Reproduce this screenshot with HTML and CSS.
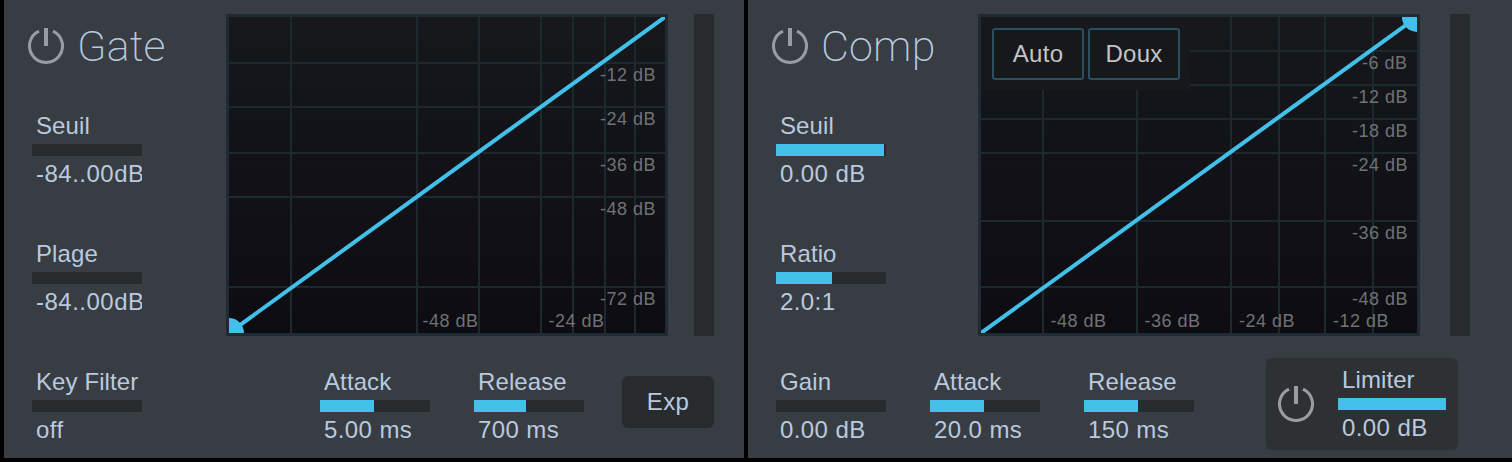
FILE: index.html
```html
<!DOCTYPE html>
<html lang="fr">
<head>
<meta charset="utf-8">
<title>Gate / Comp</title>
<link rel="stylesheet" href="styles.css">
</head>
<body>
<main class="rack">
  <section class="panel gate">
    <div class="side">
      <header class="head">
        <svg class="power" viewBox="0 0 36 36"><path d="M11 3.060A16.500 16.500 0 1 0 25 3.060"/><path class="stem" d="M18 0V18"/></svg>
        <h1 class="title">Gate</h1>
      </header>
      <div class="knob k1"><span class="label">Seuil</span><div class="bar"></div><span class="value clip">-84..00dB</span></div>
      <div class="knob k2"><span class="label">Plage</span><div class="bar"></div><span class="value clip">-84..00dB</span></div>
    </div>
    <div class="graph">
      <svg class="plot" viewBox="0 0 436 316">
        <defs><linearGradient id="g1" x1="0" y1="0" x2="0" y2="1"><stop offset="0" stop-color="#16181c"/><stop offset="1" stop-color="#0d0c12"/></linearGradient></defs>
        <rect width="436" height="316" fill="url(#g1)"/>
        <path class="grid" d="M62 0V316M188 0V316M250 0V316M312 0V316M344 0V316M376 0V316M406 0V316M0 46H436M0 90H436M0 136H436M0 180H436M0 270H436"/>
        <text class="db" x="371" y="64">-12 dB</text>
        <text class="db" x="371" y="108">-24 dB</text>
        <text class="db" x="371" y="154">-36 dB</text>
        <text class="db" x="371" y="198">-48 dB</text>
        <text class="db" x="371" y="288">-72 dB</text>
        <text class="db" x="193.500" y="310">-48 dB</text>
        <text class="db" x="319.500" y="310">-24 dB</text>
        <path class="curve" d="M0 316L436 0"/>
        <path class="dot" d="M0 301A15 15 0 0 1 15 316H0Z"/>
      </svg>
    </div>
    <div class="meter"></div>
    <div class="foot">
      <div class="knob"><span class="label">Key Filter</span><div class="bar"></div><span class="value">off</span></div>
      <div class="knob knob-attack"><span class="label">Attack</span><div class="bar"><div class="fill" style="width:49%"></div></div><span class="value">5.00 ms</span></div>
      <div class="knob knob-release"><span class="label">Release</span><div class="bar"><div class="fill" style="width:47%"></div></div><span class="value">700 ms</span></div>
      <button class="exp">Exp</button>
    </div>
  </section>
  <section class="panel comp">
    <div class="side">
      <header class="head">
        <svg class="power" viewBox="0 0 36 36"><path d="M11 3.060A16.500 16.500 0 1 0 25 3.060"/><path class="stem" d="M18 0V18"/></svg>
        <h1 class="title">Comp</h1>
      </header>
      <div class="knob k1"><span class="label">Seuil</span><div class="bar"><div class="fill" style="width:98%"></div></div><span class="value">0.00 dB</span></div>
      <div class="knob k2"><span class="label">Ratio</span><div class="bar"><div class="fill" style="width:51%"></div></div><span class="value">2.0:1</span></div>
    </div>
    <div class="graph">
      <svg class="plot" viewBox="0 0 436 316">
        <defs><linearGradient id="g2" x1="0" y1="0" x2="0" y2="1"><stop offset="0" stop-color="#16181c"/><stop offset="1" stop-color="#0d0c12"/></linearGradient></defs>
        <rect width="436" height="316" fill="url(#g2)"/>
        <path class="grid" d="M62 0V316M156 0V316M250 0V316M298 0V316M344 0V316M392 0V316M0 34H436M0 68H436M0 102H436M0 136H436M0 204H436M0 270H436"/>
        <rect x="0" y="0" width="209" height="73" fill="#16181c"/>
        <text class="db" x="381" y="52">-6 dB</text>
        <text class="db" x="371" y="86">-12 dB</text>
        <text class="db" x="371" y="120">-18 dB</text>
        <text class="db" x="371" y="154">-24 dB</text>
        <text class="db" x="371" y="222">-36 dB</text>
        <text class="db" x="371" y="288">-48 dB</text>
        <text class="db" x="69.500" y="310">-48 dB</text>
        <text class="db" x="163.500" y="310">-36 dB</text>
        <text class="db" x="258" y="310">-24 dB</text>
        <text class="db" x="352" y="310">-12 dB</text>
        <path class="curve" d="M0 316L436 0"/>
        <path class="dot" d="M421 0A15 15 0 0 0 436 15V0Z"/>
      </svg>
      <div class="modes"><button class="mode">Auto</button><button class="mode">Doux</button></div>
    </div>
    <div class="meter"></div>
    <div class="foot">
      <div class="knob"><span class="label">Gain</span><div class="bar"></div><span class="value">0.00 dB</span></div>
      <div class="knob knob-attack"><span class="label">Attack</span><div class="bar"><div class="fill" style="width:49%"></div></div><span class="value">20.0 ms</span></div>
      <div class="knob knob-release"><span class="label">Release</span><div class="bar"><div class="fill" style="width:49%"></div></div><span class="value">150 ms</span></div>
      <div class="limiter">
        <svg class="power" viewBox="0 0 36 36"><path d="M11 3.060A16.500 16.500 0 1 0 25 3.060"/><path class="stem" d="M18 0V18"/></svg>
        <div class="knob"><span class="label">Limiter</span><div class="bar"><div class="fill" style="width:100%"></div></div><span class="value">0.00 dB</span></div>
      </div>
    </div>
  </section>
</main>
</body>
</html>
```
FILE: styles.css
```css
* { box-sizing: border-box; }
html, body { margin: 0; height: 100%; background: #000; overflow: hidden; }
body { font-family: "Liberation Sans", Arial, sans-serif; }
.rack { display: flex; gap: 4px; padding-left: 4px; height: 458px; }
.panel {
  display: grid;
  grid-template-rows: 322px auto;
  height: 458px;
  background: #383c43;
  padding: 14px 0 0 24px;
}
.gate { width: 740px; grid-template-columns: 198px 442px 26px 20px; }
.comp { width: 764px; grid-template-columns: 206px 442px 30px 20px; }
.side { display: flex; flex-direction: column; }
.head { display: flex; align-items: center; gap: 13px; height: 36px; margin-top: 14px; }
.power { width: 36px; height: 36px; flex: none; fill: none; stroke: #999da3; stroke-width: 3; }
.power .stem { stroke-width: 4; }
.title { margin: 0; font: 200 43px/38px Roboto, "Liberation Sans", sans-serif; color: #b9cadf; letter-spacing: .2px; }
.knob { display: flex; flex-direction: column; width: 110px; }
.label { height: 30px; padding-left: 4px; font-size: 24px; line-height: 24px; color: #b9cadf; white-space: nowrap; letter-spacing: .1px; }
.value { height: 30px; padding: 6px 0 0 4px; font-size: 24px; line-height: 24px; color: #b9cadf; white-space: nowrap; letter-spacing: .4px; }
.clip { overflow: hidden; letter-spacing: .5px; }
.bar { height: 12px; background: #282b2d; flex: none; }
.fill { height: 100%; background: #42c0e9; }
.k1 { margin-top: 50px; margin-left: 4px; }
.k2 { margin-top: 56px; margin-left: 4px; }
.graph { position: relative; grid-column: 2; border: 3px solid #1f2a33; height: 322px; width: 442px; }
.plot { display: block; width: 436px; height: 316px; }
.grid { stroke: #1c2a30; stroke-width: 2; fill: none; }
.db { font-size: 18px; fill: #6f7276; letter-spacing: .5px; }
.curve { stroke: #42c0e9; stroke-width: 4; fill: none; }
.dot { fill: #42c0e9; }
.meter { grid-column: 4; background: #282b2d; height: 322px; }
.foot { grid-column: 1 / -1; display: flex; align-items: flex-start; padding-top: 34px; margin-left: 4px; }
.exp {
  width: 92px; height: 52px; margin: 6px 0 0 38px; padding: 0; border: 0; border-radius: 6px;
  background: #282b2e; color: #b9cadf; font: 24px "Liberation Sans", Arial, sans-serif; letter-spacing: .3px;
}
.knob-attack { margin-left: 178px; }
.knob-release { margin-left: 44px; }
.comp .knob-attack { margin-left: 44px; }
.limiter {
  display: flex; align-items: center; gap: 24px; width: 192px; height: 92px; padding: 0 12px;
  margin: -12px 0 0 72px; background: #2e3134; border-radius: 6px;
}
.limiter .knob { width: 108px; }
.modes { position: absolute; left: 11px; top: 11px; display: flex; gap: 4px; }
.mode {
  width: 92px; height: 52px; padding: 0; background: transparent; border: 2px solid #2a5060; border-radius: 3px;
  color: #c2c4c8; font: 24px "Liberation Sans", Arial, sans-serif; letter-spacing: .3px;
}
```
